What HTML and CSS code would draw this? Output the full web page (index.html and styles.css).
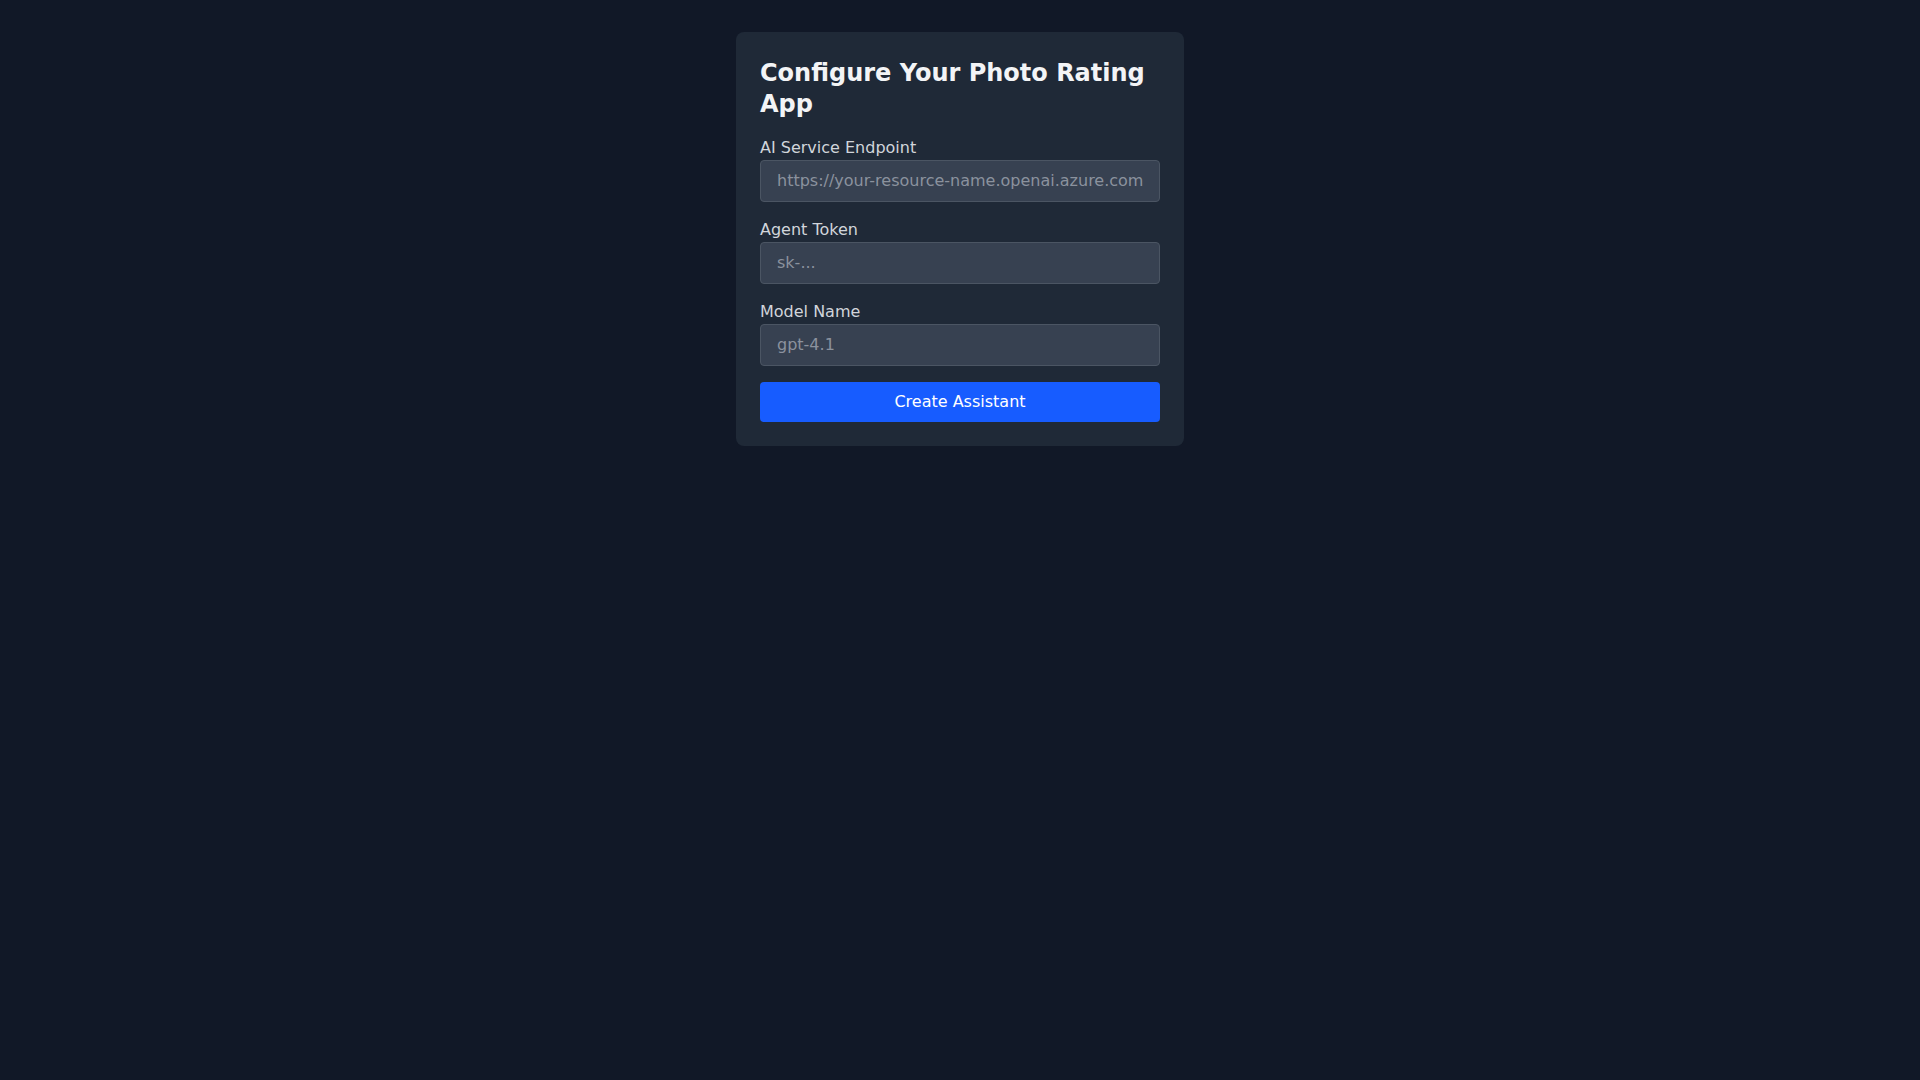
FILE: index.html
```html
<!DOCTYPE html>
<html lang="en">
<head>
<meta charset="utf-8">
<title>Configure Your Photo Rating App</title>
<link rel="stylesheet" href="styles.css">
</head>
<body>
<main class="page">
  <section class="card">
    <h2 class="title">Configure Your Photo Rating App</h2>
    <form class="form" onsubmit="return false;">
      <div class="field">
        <label class="label" for="endpoint">AI Service Endpoint</label>
        <input class="input" id="endpoint" type="text" placeholder="https://your-resource-name.openai.azure.com">
      </div>
      <div class="field">
        <label class="label" for="token">Agent Token</label>
        <input class="input" id="token" type="password" placeholder="sk-...">
      </div>
      <div class="field field-last">
        <label class="label" for="model">Model Name</label>
        <input class="input" id="model" type="text" placeholder="gpt-4.1">
      </div>
      <button class="button" type="submit">Create Assistant</button>
    </form>
  </section>
</main>
</body>
</html>
```

FILE: styles.css
```css
* {
  box-sizing: border-box;
}

html, body {
  margin: 0;
  padding: 0;
  background: #111827;
}

body {
  font-family: "DejaVu Sans", "Liberation Sans", sans-serif;
  color: #f3f4f6;
  min-height: 100vh;
}

.page {
  display: flex;
  justify-content: center;
  padding-top: 32px;
}

.card {
  width: 448px;
  background: #1f2937;
  border-radius: 8px;
  padding: 24px;
}

.title {
  margin: 2px 0 19px 0;
  font-size: 24px;
  line-height: 1.28;
  font-weight: 700;
  color: #f3f4f6;
}

.form {
  display: flex;
  flex-direction: column;
}

.field {
  display: flex;
  flex-direction: column;
  margin-bottom: 18px;
}

.field-last {
  margin-bottom: 16px;
}

.label {
  font-size: 16px;
  line-height: normal;
  color: #d1d5db;
  margin-bottom: 3px;
}

.input {
  font-family: "DejaVu Sans", "Liberation Sans", sans-serif;
  font-size: 16px;
  line-height: normal;
  height: 42px;
  padding: 9px 16px 11px 16px;
  background: #374151;
  border: 1px solid #4b5563;
  border-radius: 4px;
  color: #f3f4f6;
  outline: none;
  width: 100%;
}

.input::placeholder {
  color: #8b929e;
  opacity: 1;
}

.button {
  font-family: "DejaVu Sans", "Liberation Sans", sans-serif;
  font-size: 16px;
  line-height: normal;
  height: 40px;
  padding: 0 0 2px 0;
  border: none;
  border-radius: 4px;
  background: #175cff;
  color: #ffffff;
  cursor: pointer;
  width: 100%;
}
```
